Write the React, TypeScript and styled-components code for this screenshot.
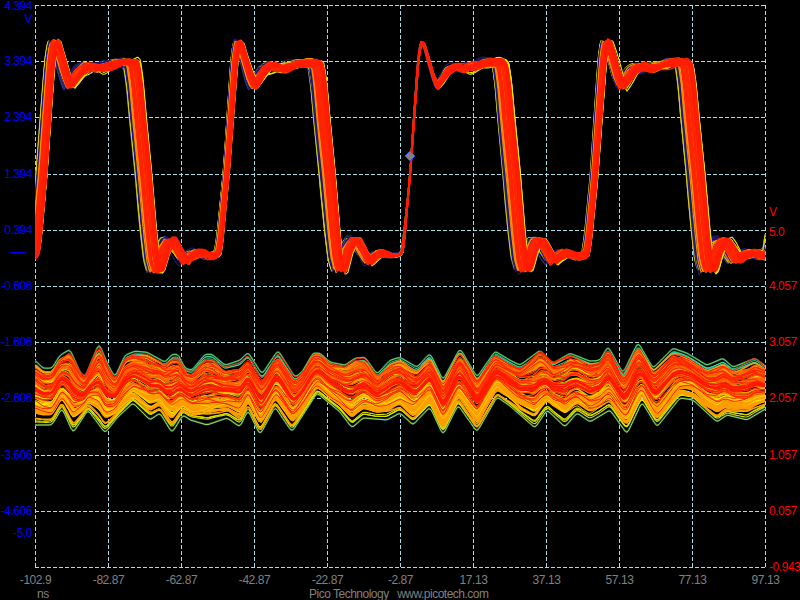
import React, {useMemo} from 'react'
import styled, {createGlobalStyle} from 'styled-components'

type Pt = [number, number]

const GlobalStyle = createGlobalStyle`
  html, body {
    margin: 0;
    padding: 0;
    background: #000;
  }
`

const Scope = styled.div`
  width: 800px;
  height: 600px;
  background: #000;
  overflow: hidden;
  display: grid;
  grid-template-columns: 35px 731px 34px;
  grid-template-rows: 5px 563px 32px;
  font-family: "Liberation Sans", Arial, sans-serif;
  font-size: 12px;
  letter-spacing: -0.45px;
`

const YAxis = styled.div<{$color: string; $column: number}>`
  grid-row: 2;
  grid-column: ${(p) => p.$column};
  position: relative;
  display: flex;
  flex-direction: column;
  justify-content: space-between;
  padding-bottom: 1px;
  color: ${(p) => p.$color};
`

const YTick = styled.div<{$side: 'left' | 'right'}>`
  height: 0;
  display: flex;
  align-items: center;
  justify-content: ${(p) => (p.$side === 'left' ? 'flex-end' : 'flex-start')};
  padding: ${(p) => (p.$side === 'left' ? '0 3px 0 0' : '0 0 0 3px')};
  white-space: nowrap;
`

const AxisMark = styled.div<{$top: number; $side: 'left' | 'right'}>`
  position: absolute;
  top: ${(p) => p.$top}px;
  ${(p) => (p.$side === 'left' ? 'right: 3px;' : 'left: 3px;')}
  line-height: 14px;
`

const ZeroDash = styled.div`
  position: absolute;
  top: 247px;
  left: 10px;
  width: 16px;
  height: 1px;
  background: #0000ff;
`

const TopLabel = styled.span`
  position: relative;
  top: 1px;
`

const Plot = styled.svg`
  grid-row: 2;
  grid-column: 2;
  display: block;
  width: 731px;
  height: 563px;
`

const Footer = styled.div`
  grid-column: 1 / 4;
  grid-row: 3;
  color: #808080;
  display: flex;
  flex-direction: column;
`

const XAxis = styled.div`
  display: flex;
  justify-content: space-between;
  padding: 5px 34px 0 35px;
  height: 14px;
`

const XTick = styled.div`
  width: 1px;
  display: flex;
  justify-content: center;
  white-space: nowrap;
  line-height: 14px;
`

const Caption = styled.div`
  margin-top: 1px;
  padding-left: 37px;
  display: grid;
  grid-template-columns: 272px auto;
  line-height: 12px;
`

const Credit = styled.div`
  letter-spacing: -0.5px;
  white-space: pre;
`

const gridX = Array.from({length: 11}, (_, k) => 35 + 73 * k + 0.5)
const gridY = Array.from({length: 11}, (_, k) => Math.round(5 + 56.2 * k) + 0.5)

const leftLabels = ['3.394', '2.394', '1.394', '0.394', '-0.606', '-1.606', '-2.606', '-3.606', '-4.606', '']
const rightLabels = ['', '', '', '', '', '4.057', '3.057', '2.057', '1.057', '0.057', '-0.943']
const timeLabels = ['-102.9', '-82.87', '-62.87', '-42.87', '-22.87', '-2.87', '17.13', '37.13', '57.13', '77.13', '97.13']

const interp = (pts: Pt[], x: number): number => {
  if (x <= pts[0][0]) return pts[0][1]
  for (let i = 1; i < pts.length; i++) {
    if (x <= pts[i][0]) {
      const [x0, y0] = pts[i - 1]
      const [x1, y1] = pts[i]
      return y0 + ((y1 - y0) * (x - x0)) / (x1 - x0)
    }
  }
  return pts[pts.length - 1][1]
}

// rounds off the corners of the hand read envelopes
const smooth = (pts: Pt[], x: number): number =>
  (interp(pts, x - 1.5) + interp(pts, x) + interp(pts, x + 1.5)) / 3

const rng = (seed: number) => () => {
  seed = (seed + 0x6d2b79f5) | 0
  let t = Math.imul(seed ^ (seed >>> 15), 1 | seed)
  t = (t + Math.imul(t ^ (t >>> 7), 61 | t)) ^ t
  return ((t ^ (t >>> 14)) >>> 0) / 4294967296
}

// one period of the top channel, x relative to the overshoot peak
const pulse: Pt[] = [
  [-22, 255], [-19, 252], [-17, 238], [-16, 228], [-11, 174], [-7, 117], [-3, 62], [-1, 47], [0, 43], [3, 45],
  [8, 62], [12, 76], [16, 86], [20, 80], [26, 71], [34, 66], [44, 69], [54, 66], [64, 63], [76, 62], [79, 65],
  [82, 85], [85, 117], [91, 174], [96, 230], [99, 258], [102, 270], [105, 267], [110, 250], [115, 241], [119, 241],
  [124, 249], [131, 261], [137, 256], [143, 253], [150, 254], [155, 256], [162, 255],
]

const spread: Pt[] = [
  [35, 6], [53, 5], [138, 9], [225, 3], [320, 9], [392, 2.5], [408, 0.3], [420, 0.6], [445, 2], [505, 9.5], [590, 3.5],
  [688, 10], [770, 7],
]

const upperEdge: Pt[] = [
  [35, 360], [43, 368], [52, 368], [60, 355], [70, 349], [80, 372], [85, 377], [92, 360], [99, 343], [108, 365],
  [115, 377], [125, 355], [135, 351], [147, 352], [165, 362], [172, 354], [178, 354], [185, 368], [192, 370],
  [205, 354], [212, 354], [225, 365], [240, 360], [248, 352], [262, 374], [278, 350], [295, 377], [302, 372],
  [313, 353], [320, 353], [330, 362], [345, 365], [355, 358], [365, 357], [377, 374], [390, 360], [400, 357],
  [417, 367], [430, 353], [443, 380], [460, 348], [477, 377], [495, 351], [510, 360], [520, 365], [540, 350],
  [553, 363], [570, 353], [590, 361], [600, 360], [608, 346], [623, 373], [638, 342], [653, 368], [673, 348],
  [687, 353], [707, 365], [723, 358], [733, 367], [755, 358], [767, 367],
]

const lowerEdge: Pt[] = [
  [35, 425], [52, 425], [62, 408], [73, 433], [88, 410], [105, 433], [117, 418], [133, 403], [150, 420], [160, 413],
  [172, 433], [183, 415], [190, 420], [207, 425], [227, 418], [240, 427], [248, 410], [260, 435], [275, 407],
  [292, 432], [317, 393], [340, 412], [352, 428], [363, 418], [387, 420], [400, 413], [413, 425], [430, 407],
  [443, 435], [458, 405], [477, 432], [497, 397], [510, 406], [535, 428], [547, 410], [565, 427], [577, 413],
  [590, 422], [610, 410], [627, 434], [642, 402], [657, 427], [680, 398], [693, 400], [717, 422], [727, 415],
  [747, 420], [767, 408],
]

interface Trace {
  points: string
  color: string
  width: number
}

const pulseTrace = (j: number, noise: number, random: () => number): string => {
  const p1 = random() * 6.28
  const p2 = random() * 6.28
  const f1 = 0.05 + random() * 0.05
  const f2 = 0.17 + random() * 0.1
  const bias = (random() - 0.5) * 1.2
  const out: string[] = []
  for (let x = 35; x <= 765; x++) {
    const shifted = x - j * interp(spread, x)
    const t = ((((shifted - 31) % 184) + 184) % 184) - 22
    const calm = Math.min(1, Math.abs(x - 408) / 30)
    const dy = calm * noise * (Math.sin(x * f1 + p1) * 0.7 + Math.sin(x * f2 + p2) * 0.5 + bias)
    out.push(`${x},${(interp(pulse, t) + dy).toFixed(1)}`)
  }
  return out.join(' ')
}

const noiseTrace = (u: number, wander: number, random: () => number): string => {
  const p1 = random() * 6.28
  const p2 = random() * 6.28
  const f1 = 0.012 + random() * 0.02
  const f2 = 0.05 + random() * 0.06
  const out: string[] = []
  for (let x = 35; x <= 765; x += 2) {
    const v = u + wander * (Math.sin(x * f1 + p1) * 0.65 + Math.sin(x * f2 + p2) * 0.35)
    const k = Math.min(1, Math.max(0, v))
    const top = smooth(upperEdge, x)
    const bottom = smooth(lowerEdge, x)
    out.push(`${x},${(top + (bottom - top) * k).toFixed(1)}`)
  }
  return out.join(' ')
}

const buildPulseTraces = (): Trace[] => {
  const random = rng(41)
  const traces: Trace[] = []
  const range = (lo: number, hi: number) => lo + random() * (hi - lo)
  const add = (n: number, lo: number, hi: number, color: string, width: number, noise: number) => {
    for (let i = 0; i < n; i++) traces.push({points: pulseTrace(range(lo, hi), noise, random), color, width})
  }
  add(3, -1, -0.97, '#3c3c96', 1.1, 3.5)
  add(3, -1, -0.9, '#d8d000', 0.9, 2.5)
  add(7, -0.95, -0.35, '#1c1c78', 1.1, 3.5)
  add(5, 0.88, 1, '#f4e800', 1.1, 3.5)
  add(6, -0.7, 0.2, '#ffb000', 0.9, 2.4)
  add(10, -0.65, 0.75, '#ff8a00', 1.2, 2.6)
  add(20, -0.35, 0.85, '#ff2400', 1.3, 2.6)
  add(6, 0.45, 0.85, '#ff1c00', 1.8, 2.4)
  return traces
}

const buildNoiseTraces = (): Trace[] => {
  const random = rng(97)
  const traces: Trace[] = []
  const add = (n: number, lo: number, hi: number, wander: number, color: string, width: number) => {
    for (let i = 0; i < n; i++) {
      traces.push({points: noiseTrace(lo + random() * (hi - lo), wander, random), color, width})
    }
  }
  add(2, 0, 0.01, 0, '#1f5040', 1.8)
  add(2, 0.99, 1, 0, '#1f5040', 1.8)
  add(1, 0, 0.01, 0, '#66d868', 1)
  add(1, 0.99, 1, 0, '#a0d850', 1)
  add(3, 0.03, 0.1, 0.03, '#35e0a8', 0.9)
  add(3, 0.9, 0.95, 0.02, '#d8e000', 1.1)
  add(14, 0.62, 0.9, 0.05, '#f6e000', 1.5)
  add(36, 0.09, 0.86, 0.08, '#ff9c00', 1.6)
  add(10, 0.15, 0.78, 0.14, '#ffd400', 0.9)
  add(18, 0.1, 0.76, 0.12, '#ff6000', 1.2)
  add(18, 0.12, 0.7, 0.14, '#ff2400', 1)
  add(4, 0.42, 0.52, 0.05, '#ff1800', 1.6)
  return traces
}

const App = (): JSX.Element => {
  const pulseTraces = useMemo(buildPulseTraces, [])
  const noiseTraces = useMemo(buildNoiseTraces, [])

  return (
    <Scope>
      <GlobalStyle />
      <YAxis $color='#0000ff' $column={1}>
        <YTick $side='left'><TopLabel>4.394</TopLabel></YTick>
        {leftLabels.map((label, i) => (
          <YTick key={i} $side='left'>{label}</YTick>
        ))}
        <AxisMark $top={7} $side='left'>V</AxisMark>
        <ZeroDash />
        <AxisMark $top={521} $side='left'>-5.0</AxisMark>
      </YAxis>
      <Plot viewBox='35 5 731 563'>
        {gridX.map((x) => (
          <line key={x} x1={x} x2={x} y1={5} y2={568} stroke='#a8dce4' strokeDasharray='4 2' shapeRendering='crispEdges' />
        ))}
        {gridY.map((y) => (
          <line key={y} x1={35} x2={766} y1={y} y2={y} stroke='#a8dce4' strokeDasharray='4 2' shapeRendering='crispEdges' />
        ))}
        {[...pulseTraces, ...noiseTraces].map((trace, i) => (
          <polyline key={i} points={trace.points} fill='none' stroke={trace.color} strokeWidth={trace.width} />
        ))}
        <polygon points='410,151 415,156 410,161 405,156' fill='#808080' stroke='#2a50ff' strokeWidth={1} />
      </Plot>
      <YAxis $color='#ff0000' $column={3}>
        {rightLabels.map((label, i) => (
          <YTick key={i} $side='right'>{label}</YTick>
        ))}
        <AxisMark $top={200} $side='right'>V</AxisMark>
        <AxisMark $top={220} $side='right'>5.0</AxisMark>
      </YAxis>
      <Footer>
        <XAxis>
          {timeLabels.map((label) => (
            <XTick key={label}>{label}</XTick>
          ))}
        </XAxis>
        <Caption>
          <div>ns</div>
          <Credit>Pico Technology   www.picotech.com</Credit>
        </Caption>
      </Footer>
    </Scope>
  )
}

export default App
